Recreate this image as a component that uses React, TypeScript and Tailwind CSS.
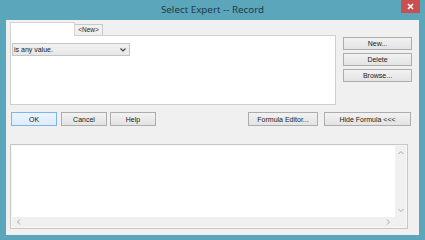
import React from "react";

const btn =
  "flex items-center justify-center border border-[#adadad] bg-gradient-to-b from-[#f2f2f2] to-[#e3e3e3] text-[7px] text-[#1a1a1a] leading-none";

function Chev({ d }: { d: string }) {
  return (
    <svg width="6" height="6" viewBox="0 0 6 6" className="block">
      <path d={d} fill="none" stroke="#a8a8a8" strokeWidth="1" />
    </svg>
  );
}

export default function App() {
  return (
    <div
      className="w-[425px] h-[240px] bg-[#5ba6bb] flex flex-col overflow-hidden"
      style={{ fontFamily: '"Liberation Sans", Arial, sans-serif' }}
    >
      <div className="relative h-[20px] flex items-center justify-center shrink-0">
        <span
          className="text-[9.8px] text-[#1f3a44] mt-[1px]"
          style={{ fontFamily: '"Noto Sans", "Liberation Sans", sans-serif' }}
        >
          Select Expert -- Record
        </span>
        <div className="absolute right-[5px] top-0 w-[19px] h-[13px] bg-[#c9504f] flex items-center justify-center">
          <svg width="7" height="7" viewBox="0 0 7 7">
            <path d="M1 1L6 6M6 1L1 6" stroke="#fff" strokeWidth="1.6" />
          </svg>
        </div>
      </div>
      <div className="mx-[6px] h-[215px] bg-[#f0f0f0] flex flex-col pl-[4px] pt-[2px]">
        <div className="flex">
          <div className="flex flex-col w-[326px]">
            <div className="flex h-[13px] items-end">
              <div className="w-[65px] h-[14px] bg-white border border-b-0 border-[#d4d4d4] -mb-px relative z-10" />
              <div className="w-[28px] h-[11px] bg-[#f0f0f0] border border-b-0 border-l-0 border-[#c8c8c8] flex items-center justify-center text-[6.5px] text-[#222]">
                &lt;New&gt;
              </div>
            </div>
            <div className="h-[70px] bg-white border border-[#cfcfcf] pt-[7px] pl-[1px]">
              <div className="w-[118px] h-[13px] border border-[#c4c4c4] bg-gradient-to-b from-[#f2f2f2] to-[#e6e6e6] flex items-center justify-between pl-[1px] pr-[3px]">
                <span className="text-[7px] text-[#222] leading-none">is any value.</span>
                <svg width="6" height="4" viewBox="0 0 6 4">
                  <path d="M0.5 0.5L3 3L5.5 0.5" fill="none" stroke="#444" strokeWidth="1.2" />
                </svg>
              </div>
            </div>
          </div>
          <div className="ml-[7px] pt-[15px] flex flex-col gap-[3px]">
            <div className={`${btn} w-[69px] h-[13px]`}>New...</div>
            <div className={`${btn} w-[69px] h-[13px]`}>Delete</div>
            <div className={`${btn} w-[69px] h-[13px]`}>Browse...</div>
          </div>
        </div>
        <div className="flex mt-[7px] h-[14px]">
          <div className="ml-[1px] w-[46px] h-[14px] flex items-center justify-center border border-[#7eb4ea] bg-gradient-to-b from-[#ecf4fc] to-[#dcecfc] text-[7px] text-[#1a1a1a] leading-none">
            OK
          </div>
          <div className={`${btn} ml-[4px] w-[46px] h-[14px]`}>Cancel</div>
          <div className={`${btn} ml-[3px] w-[46px] h-[14px]`}>Help</div>
          <div className={`${btn} ml-[92px] w-[70px] h-[14px]`}>Formula Editor...</div>
          <div className={`${btn} ml-[6px] w-[87px] h-[14px]`}>Hide Formula &lt;&lt;&lt;</div>
        </div>
        <div className="mt-[18px] w-[398px] h-[85px] border border-[#c6c6c6] p-px bg-[#f7f7f7]">
          <div className="w-full h-full bg-white grid grid-cols-[1fr_11px] grid-rows-[1fr_10px]">
            <div />
            <div className="bg-[#f0f0f0] flex flex-col items-center justify-between py-[4px]">
              <Chev d="M0.5 4L3 1.5L5.5 4" />
              <Chev d="M0.5 2L3 4.5L5.5 2" />
            </div>
            <div className="bg-[#f0f0f0] flex items-center justify-between px-[4px]">
              <Chev d="M4 0.5L1.5 3L4 5.5" />
              <Chev d="M2 0.5L4.5 3L2 5.5" />
            </div>
            <div className="bg-[#f0f0f0]" />
          </div>
        </div>
      </div>
      <div className="flex-1" />
    </div>
  );
}
